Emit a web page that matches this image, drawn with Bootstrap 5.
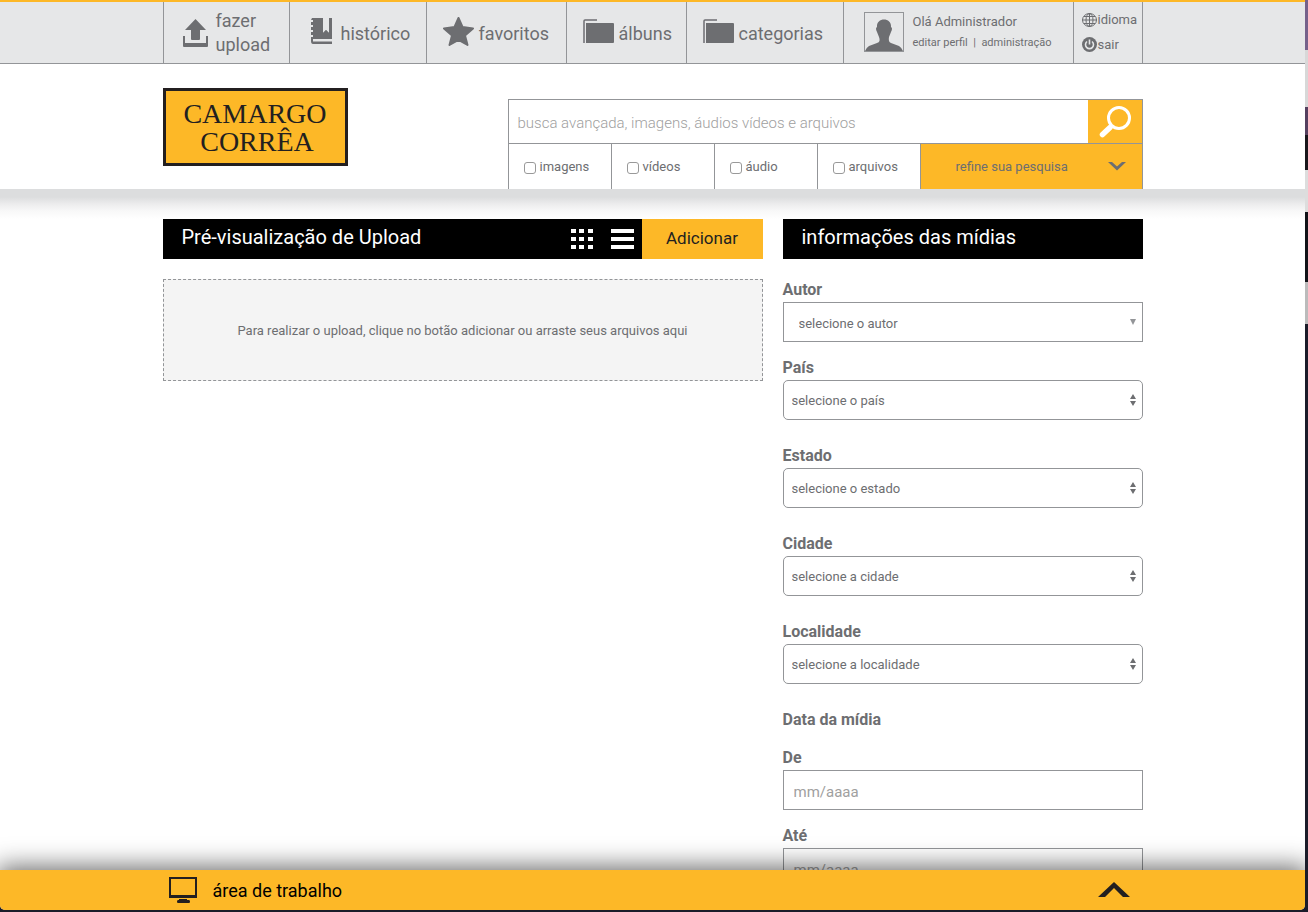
<!DOCTYPE html>
<html lang="pt-BR">
<head>
<meta charset="utf-8">
<meta name="viewport" content="width=device-width, initial-scale=1">
<title>Pré-visualização de Upload</title>
<link href="https://cdn.jsdelivr.net/npm/bootstrap@5.3.0/dist/css/bootstrap.min.css" rel="stylesheet">
<style>
:root{--gold:#fdb827;--ink:#6d6e71;--line:#939598;--bar:#e6e7e8}
body{font-family:Roboto,"Liberation Sans",sans-serif;font-size:13px;color:var(--ink);background:#17161f}
a{color:inherit;text-decoration:none}
svg{display:block;flex:none}
.desk{height:100vh;padding:0 3px 2px 0;background:linear-gradient(#75618a 0 50px,#d8d8d8 50px 107px,#55405f 107px 135px,#19171c 135px 170px,#ddd 170px 212px,#111318 212px 282px,#bbb 282px 324px,#1b1c29 324px)}
.sheet{background:#fff;border-radius:0 0 5px 5px;overflow:hidden}
.wrap{width:100%;max-width:980px;margin:0 auto}
.topbar{background:var(--bar);border-top:2px solid var(--gold);border-bottom:1px solid var(--line)}
.menu{display:grid;grid-template-columns:126fr 137fr 140fr 120fr 157fr 230fr 69fr;height:61px;border-right:1px solid var(--line)}
.menu>*{border-left:1px solid var(--line)}
.menu-link{font-size:18px;line-height:24px;gap:5px;padding:3px 0 0 16px}
.menu-link.up{gap:7px;padding:0 0 0 18px}
.menu-link.hist{gap:8px;padding-left:20px}
.menu svg{margin-bottom:6px}
.menu .user-cell svg,.menu .side-cell svg,.menu .up svg{margin-bottom:0}
.user-cell{padding:0 0 2px 20px;gap:9px}
.avatar{border:1px solid var(--line)}
.user-cell small{font-size:11px;line-height:20px}
.hello{font-size:13px;line-height:22px}
.side-cell{padding:5px 0 0 8px}
.side-cell a{line-height:25px;gap:1px}
.brandbox{width:185px;height:78px;margin-top:24px;border:3px solid #231f20;background:var(--gold);color:#231f20;font:28px/28px "Liberation Serif",serif;padding-top:9px}
.finder{width:635px;margin-top:35px;border:1px solid var(--line);border-bottom:0}
.finder input[type=text]{height:43px;border:0;padding:3px 9px 0;font-size:15px;font-weight:300;color:var(--ink);min-width:0}
input::placeholder{color:#a0a0a0;opacity:1}
.btn-gold{background:var(--gold);border:0;border-radius:0;padding:0}
.go{width:54px}
.kinds{border-top:1px solid var(--line);height:46px}
.kinds label{width:103px;border-right:1px solid var(--line);padding-left:15px;gap:4px}
.kinds input{appearance:none;width:12px;height:12px;border:1px solid #999;border-radius:3px;background:#fff;margin:2px 0 0}
.kinds input:checked{background:var(--gold)}
.refine{color:var(--ink);font-size:13px;padding:0 16px 0 35px}
.fade-band{height:30px;background:linear-gradient(#dcddde 0 8px,#ececed 15px,#f8f8f8 22px,#fff)}
.title-bar{background:#000;color:#fff;height:40px;padding-left:19px}
.title-bar h2{font-size:20px;line-height:36px;margin:0 0 4px}
.add{width:121px;font-size:17px;color:#231f20}
.tool{background:none;border:0;padding:0}
.views{gap:18px;margin-right:8px}
.drop{height:102px;margin-top:20px;padding-top:2px;background:#f4f4f4;border:1px dashed var(--line)}
.col-left{width:600px}
.col-right{width:360px}
.group{margin-bottom:25px}
.group.tight{margin-bottom:15px}
.group label,.legend{display:block;font-size:16px;font-weight:700;line-height:22px;margin-bottom:1px}
.group+.legend{margin-bottom:16px}
.box{height:40px;width:100%;border:1px solid var(--line);border-radius:5px;background:#fff;color:var(--ink);appearance:none;padding:2px 24px 0 8px}
.box.square{border-radius:0;padding:4px 24px 0 15px}
.box.date{border-radius:0;padding:4px 10px 0;font-size:15px}
.arrow{position:absolute;right:6px;top:50%;transform:translateY(-50%);pointer-events:none}
.dock{height:40px;flex:none;background:var(--gold);color:#000;font-size:18px;box-shadow:0 0 26px 3px rgba(0,0,0,.6);position:relative}
.sheet main{scrollbar-width:none;min-height:0}
</style>
</head>
<body>
<div class="desk">
<div class="sheet h-100 d-flex flex-column">
<header>
  <div class="topbar">
    <nav class="wrap menu">
      <a href="#" class="menu-link up d-flex align-items-center">
        <svg width="27" height="29" viewBox="0 0 27 29" fill="#6d6e71"><path d="M13.500 1 24 12H18v9q0 1-1 1H10q-1 0-1-1v-9H3zM1 18h2v7h21v-7h2v10q0 1-1 1H2q-1 0-1-1z"/></svg>
        <span>fazer<br>upload</span></a>
      <a href="#" class="menu-link hist d-flex align-items-center">
        <svg width="23" height="28" viewBox="0 0 23 28"><path fill="#6d6e71" d="M2 1h11v15l3-3 3 3V1h3v21H3v2.500h19V27H3q-2 0-2-3v-4h2v-2H1v-3h2v-2H1v-3h2V8H1V5h2V3H1z"/><path fill="#6d6e71" d="M5 1h8v21H5zM19 1h3v21h-3zM12 16h1l3-3 3 3v6h-7z"/></svg>
        <span>histórico</span></a>
      <a href="#" class="menu-link d-flex align-items-center">
        <svg width="31" height="29" viewBox="0 0 31 29"><path fill="#6d6e71" stroke="#6d6e71" stroke-width="2" stroke-linejoin="round" d="m15.500 1 4 9L30 11.500l-8 7L24.500 28l-9-5-9 5L9 18.500l-8-7L11.500 10z"/></svg>
        <span>favoritos</span></a>
      <a href="#" class="menu-link d-flex align-items-center">
        <svg width="31" height="25" viewBox="0 0 31 25"><path d="M1 24V2q0-1 1-1h12" fill="none" stroke="#6d6e71" stroke-width="1.500"/><path d="M3 4h27q1 0 1 1v18q0 1-1 1H3z" fill="#6d6e71"/></svg>
        <span>álbuns</span></a>
      <a href="#" class="menu-link d-flex align-items-center">
        <svg width="31" height="25" viewBox="0 0 31 25"><path d="M1 24V2q0-1 1-1h12" fill="none" stroke="#6d6e71" stroke-width="1.500"/><path d="M3 4h27q1 0 1 1v18q0 1-1 1H3z" fill="#6d6e71"/></svg>
        <span>categorias</span></a>
      <div class="user-cell d-flex align-items-center">
        <div class="avatar"><svg width="38" height="38" viewBox="0 0 38 38" fill="#6d6e71"><path d="M12 14C11 4 27 4 26 14q2 1 0 5l-2 5q-1 5 2 6l8 3q3 2 4 5H0q1-3 4-5l8-3q4-1 2-6l-2-5q-2-4 0-5z"/></svg></div>
        <div class="d-flex flex-column"><span class="hello">Olá Administrador</span><small><a href="#">editar perfil</a> &nbsp;|&nbsp; <a href="#">administração</a></small></div>
      </div>
      <div class="side-cell">
        <a href="#" class="d-flex align-items-center"><svg width="15" height="14" viewBox="0 0 15 14" fill="none" stroke="#6d6e71"><ellipse cx="7.500" cy="7" rx="7" ry="6.500"/><ellipse cx="7.500" cy="7" rx="3.500" ry="6.500"/><path d="M7.500 0v14M0 7h15M2 3.500h11M2 10.500h11"/></svg>idioma</a>
        <a href="#" class="d-flex align-items-center"><svg width="15" height="15" viewBox="0 0 15 15"><circle cx="7.500" cy="7.500" r="7.500" fill="#6d6e71"/><path d="M5 4.500a4 4 0 1 0 5 0M7.500 2.500v5" fill="none" stroke="#e6e7e8" stroke-width="1.600"/></svg>sair</a>
      </div>
    </nav>
  </div>
  <div class="wrap d-flex justify-content-between align-items-start">
    <a href="#" class="brandbox text-center"><span class="d-block">CAMARGO</span><span class="d-block ps-1">CORRÊA</span></a>
    <form class="finder">
      <div class="d-flex">
        <input type="text" class="flex-fill" aria-label="Busca" placeholder="busca avançada, imagens, áudios vídeos e arquivos">
        <button type="button" class="btn-gold go d-flex align-items-center justify-content-center" aria-label="Buscar"><svg width="34" height="34" viewBox="0 0 34 34" fill="none" stroke="#fff"><circle cx="21" cy="13" r="10.500" stroke-width="3"/><path d="m12 22.500-7.500 7" stroke-width="5.500" stroke-linecap="round"/></svg></button>
      </div>
      <div class="kinds d-flex">
        <label class="d-flex align-items-center"><input type="checkbox">imagens</label>
        <label class="d-flex align-items-center"><input type="checkbox">vídeos</label>
        <label class="d-flex align-items-center"><input type="checkbox">áudio</label>
        <label class="d-flex align-items-center"><input type="checkbox">arquivos</label>
        <button type="button" class="btn-gold refine flex-fill d-flex align-items-center justify-content-between">refine sua pesquisa<svg width="18" height="9" viewBox="0 0 18 9"><path fill="#6d6e71" d="M0 0h4l5 4.500L14 0h4L9 8.500z"/></svg></button>
      </div>
    </form>
  </div>
  <div class="fade-band"></div>
</header>
<main class="flex-fill overflow-auto">
  <div class="wrap d-flex justify-content-between align-items-start">
    <section class="col-left">
      <div class="title-bar d-flex align-items-center">
        <h2 class="fw-normal flex-fill">Pré-visualização de Upload</h2>
        <div class="views d-flex">
        <button type="button" class="tool" aria-label="Grade"><svg width="22" height="20" viewBox="0 0 22 20" fill="#fff"><path d="M0 0h5v4H0zM8 0h5v4H8zM17 0h5v4h-5zM0 8h5v4H0zM8 8h5v4H8zM17 8h5v4h-5zM0 16h5v4H0zM8 16h5v4H8zM17 16h5v4h-5z"/></svg></button>
        <button type="button" class="tool" aria-label="Lista"><svg width="23" height="20" viewBox="0 0 23 20" fill="#fff"><path d="M0 0h23v4H0zM0 8h23v4H0zM0 16h23v4H0z"/></svg></button>
        </div>
        <button type="button" class="btn-gold add h-100">Adicionar</button>
      </div>
      <div class="drop d-flex align-items-center justify-content-center">Para realizar o upload, clique no botão adicionar ou arraste seus arquivos aqui</div>
    </section>
    <section class="col-right">
      <div class="title-bar mb-3"><h2 class="fw-normal">informações das mídias</h2></div>
      <form class="pt-1">
        <div class="group tight"><label for="autor">Autor</label><div class="position-relative"><select id="autor" class="box square"><option>selecione o autor</option></select><svg class="arrow" width="8" height="6" viewBox="0 0 8 6"><path fill="#939598" d="M1 0h6L4 6z"/></svg></div></div>
        <div class="group"><label for="pais">País</label><div class="position-relative"><select id="pais" class="box"><option>selecione o país</option></select><svg class="arrow" width="8" height="14" viewBox="0 0 8 14"><path fill="#6d6e71" d="m4 1 3 5H1zM1 8h6l-3 5z"/></svg></div></div>
        <div class="group"><label for="estado">Estado</label><div class="position-relative"><select id="estado" class="box"><option>selecione o estado</option></select><svg class="arrow" width="8" height="14" viewBox="0 0 8 14"><path fill="#6d6e71" d="m4 1 3 5H1zM1 8h6l-3 5z"/></svg></div></div>
        <div class="group"><label for="cidade">Cidade</label><div class="position-relative"><select id="cidade" class="box"><option>selecione a cidade</option></select><svg class="arrow" width="8" height="14" viewBox="0 0 8 14"><path fill="#6d6e71" d="m4 1 3 5H1zM1 8h6l-3 5z"/></svg></div></div>
        <div class="group"><label for="local">Localidade</label><div class="position-relative"><select id="local" class="box"><option>selecione a localidade</option></select><svg class="arrow" width="8" height="14" viewBox="0 0 8 14"><path fill="#6d6e71" d="m4 1 3 5H1zM1 8h6l-3 5z"/></svg></div></div>
        <div class="legend">Data da mídia</div>
        <div class="group tight"><label for="de">De</label><input id="de" type="text" class="box date" placeholder="mm/aaaa"></div>
        <div class="group"><label for="ate">Até</label><input id="ate" type="text" class="box date" placeholder="mm/aaaa"></div>
      </form>
    </section>
  </div>
</main>
<footer class="dock d-flex">
  <div class="wrap d-flex align-items-center justify-content-between px-1">
    <div class="d-flex align-items-center gap-3"><svg width="30" height="28" viewBox="0 0 30 28"><path fill="none" stroke="#231f20" stroke-width="2" d="M3 2h26v19H3z"/><path fill="#231f20" d="M2 19h28v3H2zM12 23h8v1h2q1 0 1 1.500T22 27H11q-1 0-1-1.500T11 24h1z"/></svg><span>área de trabalho</span></div>
    <button type="button" class="tool me-2" aria-label="Abrir"><svg width="34" height="16" viewBox="0 0 34 16"><path fill="#231f20" d="M1 15 17 0l16 15h-7l-9-9-9 9z"/></svg></button>
  </div>
</footer>
</div>
</div>
<script src="https://cdn.jsdelivr.net/npm/bootstrap@5.3.0/dist/js/bootstrap.bundle.min.js"></script>
</body>
</html>
